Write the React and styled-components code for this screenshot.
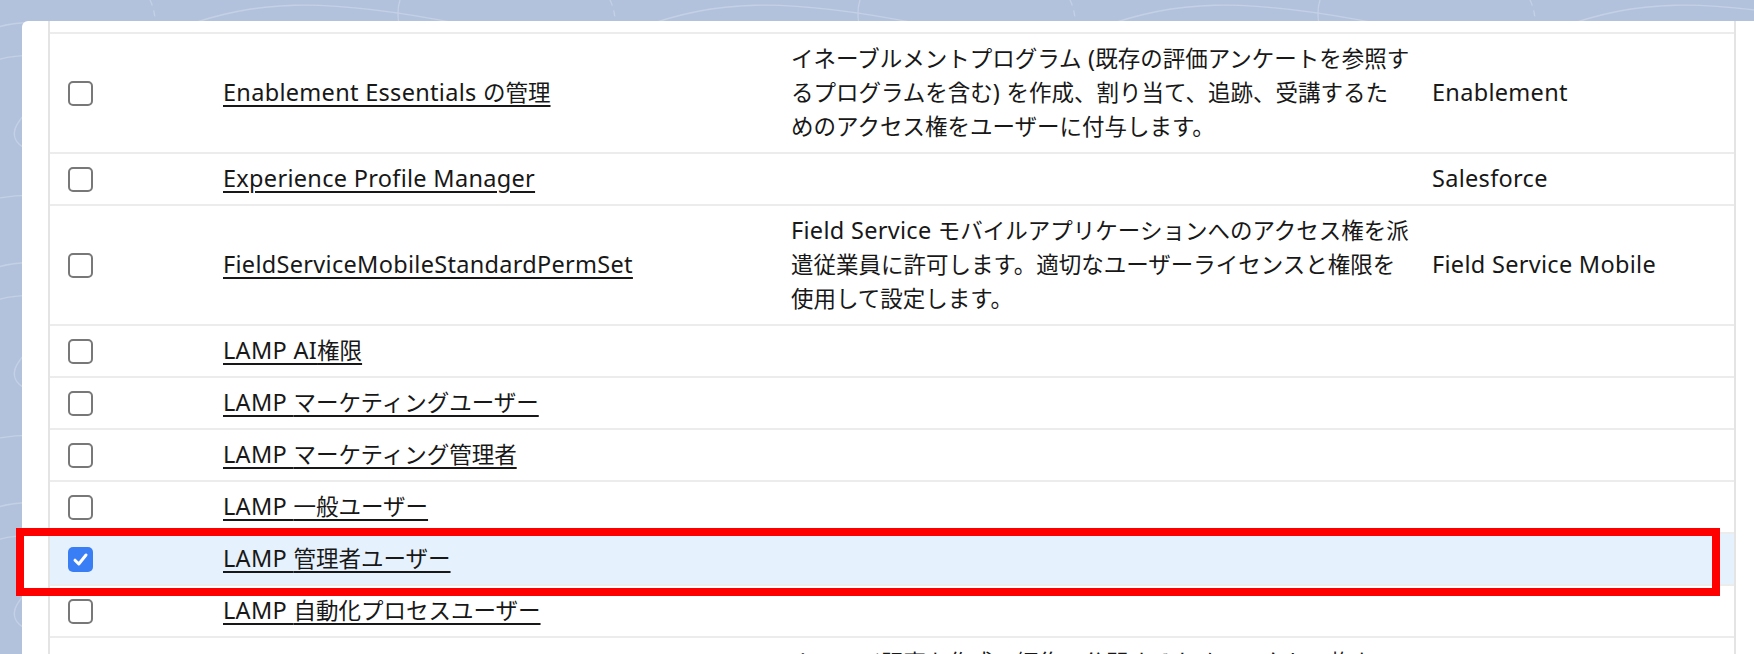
import React from "react";
import styled, { createGlobalStyle } from "styled-components";

const topoSvg = `<svg xmlns='http://www.w3.org/2000/svg' width='460' height='240' viewBox='0 0 460 240'><g fill='none' stroke='#c4d0e4' stroke-width='1.3'><path d='M-10 30 C50 5 110 55 180 28 S320 -5 470 26'/><path d='M-10 62 C60 38 120 90 200 60 S330 28 470 58'/><path d='M20 120 C40 90 90 96 110 120 S90 170 55 160 S5 140 20 120Z'/><path d='M35 122 C48 106 80 108 90 124 S78 150 58 146 S28 136 35 122Z'/><path d='M240 140 C280 100 350 110 380 140 S360 200 300 196 S210 176 240 140Z'/><path d='M-10 200 C70 180 140 230 230 205 S380 180 470 210'/><path d='M150 0 C160 20 150 40 170 60 S200 90 190 120' stroke-dasharray='6 5'/><path d='M400 0 C390 30 420 60 410 90 S380 140 420 170'/></g></svg>`;

const GlobalStyle = createGlobalStyle`
  html, body {
    margin: 0;
    padding: 0;
    overflow: hidden;
  }
  body {
    background-color: #b2c2dc;
    background-image: url("data:image/svg+xml;utf8,${encodeURIComponent(topoSvg)}");
    font-family: "Noto Sans", "Noto Sans CJK JP", sans-serif;
    color: #181818;
  }
`;

const Card = styled.div`
  box-sizing: border-box;
  width: 1744px;
  min-height: 640px;
  margin: 21px 0 0 22px;
  padding: 0 30px 0 26px;
  background: #fff;
  border-radius: 6px 0 0 0;
`;

const Table = styled.div`
  border-left: 2px solid #e4e4e4;
  border-right: 2px solid #e4e4e4;
  min-height: 640px;
`;

const Filler = styled.div`
  height: 11px;
  border-bottom: 2px solid #ececec;
`;

const Row = styled.div`
  position: relative;
  display: grid;
  grid-template-columns: 173px 568px 641px 1fr;
  align-items: center;
  padding: 8px 0;
  border-bottom: 2px solid #ececec;
  background: ${(p) => (p.$selected ? "#e5f1fc" : "#fff")};
  font-size: 22.5px;
  line-height: 34px;
`;

// latin runs are set a touch larger and wider, like the mac system font
const Latin = styled.span`
  font-size: 23.5px;
  letter-spacing: 0.3px;
  line-height: 1;
`;

const CheckCell = styled.div`
  display: flex;
  align-items: center;
  padding-left: 18px;
`;

const Box = styled.span`
  box-sizing: border-box;
  width: 25px;
  height: 25px;
  border-radius: 5px;
  display: flex;
  align-items: center;
  justify-content: center;
  border: ${(p) => (p.$checked ? "none" : "2px solid #787878")};
  background: ${(p) => (p.$checked ? "#3a7ef5" : "#fff")};
`;

const NameLink = styled.a`
  color: #181818;
  text-decoration: underline;
  text-decoration-thickness: 2px;
  text-underline-offset: 4px;
  white-space: nowrap;
`;

const Desc = styled.div`
  white-space: nowrap;
`;

const Category = styled.div`
  white-space: nowrap;
`;

const Highlight = styled.span`
  position: absolute;
  z-index: 2;
  top: -6px;
  left: -34px;
  right: 14px;
  bottom: -12px;
  border: 8px solid #ff0000;
  pointer-events: none;
`;

const CheckMark = () => (
  <svg width="17" height="17" viewBox="0 0 17 17">
    <path
      d="M3 9.2 L6.8 13 L14 4"
      fill="none"
      stroke="#fff"
      strokeWidth="3"
      strokeLinecap="round"
      strokeLinejoin="round"
    />
  </svg>
);

const mixed = (text) =>
  text
    .split(/([A-Za-z0-9 ()]+)/)
    .filter(Boolean)
    .map((part, i) =>
      /^[A-Za-z0-9 ()]+$/.test(part) ? <Latin key={i}>{part}</Latin> : part
    );

const rows = [
  {
    name: "Enablement Essentials の管理",
    desc: [
      "イネーブルメントプログラム (既存の評価アンケートを参照す",
      "るプログラムを含む) を作成、割り当て、追跡、受講するた",
      "めのアクセス権をユーザーに付与します。",
    ],
    cat: "Enablement",
  },
  { name: "Experience Profile Manager", desc: [], cat: "Salesforce" },
  {
    name: "FieldServiceMobileStandardPermSet",
    desc: [
      "Field Service モバイルアプリケーションへのアクセス権を派",
      "遣従業員に許可します。適切なユーザーライセンスと権限を",
      "使用して設定します。",
    ],
    cat: "Field Service Mobile",
  },
  { name: "LAMP AI権限", desc: [], cat: "" },
  { name: "LAMP マーケティングユーザー", desc: [], cat: "" },
  { name: "LAMP マーケティング管理者", desc: [], cat: "" },
  { name: "LAMP 一般ユーザー", desc: [], cat: "" },
  { name: "LAMP 管理者ユーザー", desc: [], cat: "", selected: true },
  { name: "LAMP 自動化プロセスユーザー", desc: [], cat: "" },
  {
    name: "Lightning Knowledge ユーザー",
    desc: [
      "ナレッジ記事を作成、編集、公開するためのアクセス権を",
      "ユーザーに付与します。記事の管理とデータカテゴリの",
      "割り当てが含まれます。",
    ],
    cat: "Salesforce",
  },
];

export default function App() {
  return (
    <>
      <GlobalStyle />
      <Card>
        <Table>
          <Filler />
          {rows.map((r) => (
            <Row key={r.name} $selected={r.selected}>
              <CheckCell>
                <Box $checked={r.selected}>{r.selected && <CheckMark />}</Box>
              </CheckCell>
              <div>
                <NameLink href="#">{mixed(r.name)}</NameLink>
              </div>
              <Desc>
                {r.desc.map((line, i) => (
                  <React.Fragment key={i}>
                    {i > 0 && <br />}
                    {mixed(line)}
                  </React.Fragment>
                ))}
              </Desc>
              <Category>{mixed(r.cat)}</Category>
              {r.selected && <Highlight />}
            </Row>
          ))}
        </Table>
      </Card>
    </>
  );
}
